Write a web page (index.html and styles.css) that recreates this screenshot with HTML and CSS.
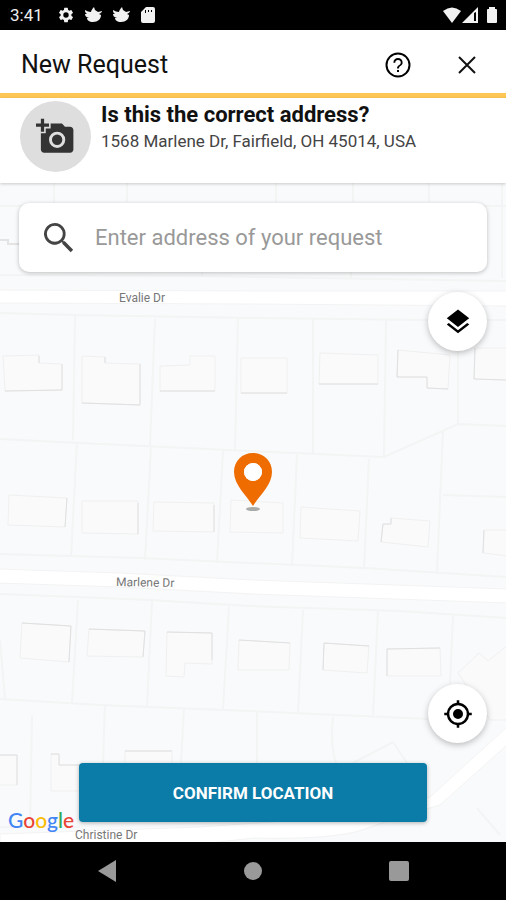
FILE: index.html
```html
<!DOCTYPE html>
<html lang="en">
<head>
  <meta charset="UTF-8">
  <meta name="viewport" content="width=device-width, initial-scale=1.0">
  <title>New Request</title>
  <link rel="stylesheet" href="styles.css">
</head>
<body>
  <div class="status-bar">
    <span class="clock">3:41</span>
    <div class="status-icons">
      <svg width="18" height="18" viewBox="0 0 24 24"><path d="M19.14 12.94c.04-.3.06-.61.06-.94s-.02-.64-.07-.94l2.03-1.58a.49.49 0 0 0 .12-.61l-1.92-3.32a.49.49 0 0 0-.59-.22l-2.39.96a7 7 0 0 0-1.62-.94l-.36-2.54a.48.48 0 0 0-.48-.41h-3.84a.48.48 0 0 0-.47.41l-.36 2.54a7 7 0 0 0-1.62.94l-2.39-.96a.48.48 0 0 0-.59.22L2.74 8.87a.48.48 0 0 0 .12.61l2.03 1.58a7 7 0 0 0 0 1.88l-2.03 1.58a.49.49 0 0 0-.12.61l1.92 3.32c.12.22.37.29.59.22l2.39-.96c.5.38 1.03.7 1.62.94l.36 2.54c.05.24.24.41.48.41h3.84c.24 0 .44-.17.47-.41l.36-2.54a7 7 0 0 0 1.62-.94l2.39.96c.22.08.47 0 .59-.22l1.92-3.32a.48.48 0 0 0-.12-.61zM12 15.6a3.6 3.6 0 1 1 0-7.2 3.6 3.6 0 0 1 0 7.2z"/></svg>
      <svg width="19" height="18" viewBox="0 0 19 18"><path d="M1 4c2 1 4 2 6 2 0-1 1-3 3-5l1 3 3 2 4-1c0 1-1 2-3 3l2 1c0 4-3 7-8 7-4 0-6-2-6-4h2C2 11 1 10 1 8h2C1 7 1 5 1 4z"/></svg>
      <svg width="19" height="18" viewBox="0 0 19 18"><path d="M1 4c2 1 4 2 6 2 0-1 1-3 3-5l1 3 3 2 4-1c0 1-1 2-3 3l2 1c0 4-3 7-8 7-4 0-6-2-6-4h2C2 11 1 10 1 8h2C1 7 1 5 1 4z"/></svg>
      <svg width="16" height="18" viewBox="0 0 16 18"><path d="M6 1h7q2 0 2 2v12q0 2-2 2H3q-2 0-2-2V6zM5 4v3h1V4zm3 0v2h1V4zm3 0v2h1V4z" fill-rule="evenodd"/></svg>
    </div>
    <div class="signal-icons">
      <svg width="20" height="18" viewBox="0 0 20 18"><path d="M1 5Q10-2 19 5L10 17z"/></svg>
      <svg width="17" height="18" viewBox="0 0 17 18"><path d="M16 1v16H0zm-4 6v8h2V6z" fill-rule="evenodd"/></svg>
      <svg class="battery" width="12" height="18" viewBox="0 0 12 18"><path d="M3 1h6v2h1q1 0 1 1v12q0 1-1 1H2q-1 0-1-1V4q0-1 1-1h1z"/></svg>
    </div>
  </div>

  <header class="app-bar">
    <h1>New Request</h1>
    <button class="icon-button" aria-label="Help">
      <svg width="30" height="30" viewBox="0 0 24 24"><path d="M11.200 17.600h1.600v-1.600h-1.600zM12 2a10 10 0 1 0 0 20 10 10 0 0 0 0-20zm0 18.400a8.400 8.400 0 1 1 0-16.800 8.400 8.400 0 0 1 0 16.800zM12 6.400a3.700 3.700 0 0 0-3.700 3.700h1.500a2.200 2.200 0 1 1 4.400 0c0 2-3 1.800-3 4.700h1.500c0-2.200 3-2.400 3-4.700A3.700 3.700 0 0 0 12 6.400z"/></svg>
    </button>
    <button class="icon-button" aria-label="Close">
      <svg width="30" height="30" viewBox="0 0 30 30"><path d="M7 7l16 16M23 7L7 23" fill="none" stroke="#111" stroke-width="2"/></svg>
    </button>
  </header>

  <section class="address-panel">
    <button class="photo-button" aria-label="Add photo">
      <svg width="39" height="39" viewBox="0 0 24 24"><path d="M3 4V1h2v3h3v2H5v3H3V6H0V4h3zm3 6V7h3V4h7l1.830 2H21c1.100 0 2 .9 2 2v12c0 1.100-.9 2-2 2H5c-1.100 0-2-.9-2-2V10h3zm7 9a5 5 0 1 0 0-10 5 5 0 0 0 0 10zm-3.200-5a3.200 3.200 0 1 0 6.400 0 3.200 3.200 0 0 0-6.400 0z"/></svg>
    </button>
    <div class="address-text">
      <h2>Is this the correct address?</h2>
      <p>1568 Marlene Dr, Fairfield, OH 45014, USA</p>
    </div>
  </section>

  <main class="map">
    <svg class="map-canvas" viewBox="0 183 506 659" preserveAspectRatio="xMidYMid slice">
      <!-- lot lines -->
      <g class="lots">
        <path d="M0 206H506M54 183v23M127 183v19M276 183v19M353 183v19M429 183v19M502 183V278M0 275L200 276 506 281M202 270v6M351 270v8"/>
        <path d="M0 313L75 315 250 318 428 320H506M75 316L73 440M155 319L150 446M238 319L235 449M313 319V453M386 319L384 457M458 348V424"/>
        <path d="M0 439L80 443 250 451 384 457 458 424 506 426M77 442L71 557M151 446L145 560M223 451L217 563M297 455L292 566M369 459L364 569M443 430L437 573M443 495L506 497"/>
        <path d="M0 554L140 558 365 568 506 577M0 594L150 600 250 606 400 611 506 618"/>
        <path d="M78 600L72 703M152 601L147 706M229 607L223 709M303 610L298 713M378 611L373 716M453 616L450 684M0 640L5 699M0 699L100 705 250 711 430 719M32 715L30 828M105 705L103 763M184 708L181 763M257 711V763M333 717Q330 745 336 763"/>
        <path d="M0 827H80M353 763L393 742 407 763M477 808L500 835"/>
        <path class="driveway" d="M0 240H8V244H20"/>
      </g>

      <!-- roads -->
      <g class="roads">
        <path d="M-2 290L250 291 508 291V306L250 304-2 303z"/>
        <path d="M-2 569L120 573 253 580 508 589V603L253 594 120 587-2 583z"/>
        <path d="M0 834L200 827 300 820Q390 812 430 797L495 738 508 726V744L440 805Q395 818 365 829T253 838L150 850H0z"/>
      </g>

      <!-- buildings -->
      <g class="houses">
        <path d="M3 356L39 355V363L62 364V390L5 391zM82 356L105 357V363L140 364V405L82 403zM160 366L190 365V356H215V391H160zM241 358H287V393H241zM320 353L378 355V384H319zM398 350L450 355 448 389 427 388V377H397zM475 348H508V380L474 379z"/>
        <path d="M9 495L67 498 65 527 8 525zM82 501H138V534L82 533zM154 502L214 503V532L153 531zM231 500L283 503V533L230 532zM301 507L360 511 358 541 300 538zM391 518L430 521 428 547 381 542 383 524H391zM484 530H508V556L483 553z"/>
        <path d="M22 623L71 626 69 662 20 658zM89 629L145 631 143 657 87 656zM167 632L212 633V664L185 663 184 677 166 676zM239 640L290 643 289 670 238 670zM324 643L369 646 367 673 323 670zM387 649L440 648 441 676H387zM458 673L479 653 488 661 508 645V720H490z"/>
        <path d="M-2 755H17V785H-2zM51 754H59V765H130V791H51zM125 751H172V770H125z"/>
      </g>
      <g class="shade">
        <path d="M39 356V363M62 364V390L5 391M105 357V363M140 364V405L82 403M215 391H160M287 393H241M319 384H378M398 350L397 377H427V388L448 389M475 348L474 379 506 380"/>
        <path d="M67 498L65 527M138 503V534M214 505V532M391 518V524H383L381 542M484 530L483 553"/>
        <path d="M22 623L71 626 69 662M89 629L145 631 143 657M167 632L212 633V660M239 640L290 643M324 643L369 646M323 670L324 643M387 676V649L440 648M0 755H17V785M51 754H59V765H80M125 751H172"/>
      </g>

      <g class="street-names">
        <text x="119" y="302">Evalie Dr</text>
        <text x="116" y="586" transform="rotate(1 116 586)">Marlene Dr</text>
        <text x="75" y="839">Christine Dr</text>
      </g>
    </svg>

    <svg class="pin" width="40" height="60" viewBox="0 0 40 60">
      <ellipse cx="20" cy="56" rx="7" ry="2" fill="#a9aba8"/>
      <path d="M20 0C9 0 1 8 1 19c0 13 13 24 19 34 6-10 19-21 19-34C39 8 31 0 20 0zm0 10a9 9 0 1 1 0 18 9 9 0 0 1 0-18z" fill="#ef6c00"/>
      <circle cx="20" cy="19" r="9" fill="#fff"/>
    </svg>

    <div class="map-controls">
      <label class="search-box">
        <svg width="40" height="40" viewBox="0 0 24 24"><path d="M15.500 14h-.79l-.28-.27A6.500 6.500 0 1 0 13.730 14.430l.27.28v.79l5 4.990L20.490 19l-4.990-5zm-6 .3a4.800 4.800 0 1 1 0-9.600 4.800 4.800 0 0 1 0 9.600z" fill="#444"/></svg>
        <input type="text" placeholder="Enter address of your request" aria-label="Address of your request">
      </label>
      <button class="round-button" aria-label="Map layers">
        <svg width="30" height="30" viewBox="0 0 24 24"><path d="M11.990 18.540l-7.370-5.730L3 14.070l9 7 9-7-1.630-1.270zM12 16l7.360-5.730L21 9l-9-7-9 7 1.630 1.270z"/></svg>
      </button>
      <button class="round-button locate" aria-label="My location">
        <svg width="30" height="30" viewBox="0 0 24 24"><path d="M12 8a4 4 0 1 0 0 8 4 4 0 0 0 0-8zm8.940 3A9 9 0 0 0 13 3.060V1h-2v2.060A9 9 0 0 0 3.060 11H1v2h2.060A9 9 0 0 0 11 20.940V23h2v-2.060A9 9 0 0 0 20.940 13H23v-2zM12 19a7 7 0 1 1 0-14 7 7 0 0 1 0 14z"/></svg>
      </button>
      <button class="confirm">CONFIRM LOCATION</button>
    </div>

    <div class="google"><span class="blue">G</span><span class="red">o</span><span class="yellow">o</span><span class="blue">g</span><span class="green">l</span><span class="red">e</span></div>
  </main>

  <nav class="nav-bar">
    <button aria-label="Back"><svg width="20" height="22" viewBox="0 0 20 22"><path d="M19 0v22L1 11z"/></svg></button>
    <button aria-label="Home"><svg width="20" height="20" viewBox="0 0 20 20"><circle cx="10" cy="10" r="9"/></svg></button>
    <button aria-label="Recent apps"><svg width="20" height="20" viewBox="0 0 20 20"><rect width="20" height="20" rx="2"/></svg></button>
  </nav>
</body>
</html>
```
FILE: styles.css
```css
* {
  box-sizing: border-box;
}

body {
  margin: 0;
  min-height: 100vh;
  display: flex;
  flex-direction: column;
  font-family: Roboto, 'Liberation Sans', sans-serif;
  color: #111;
  background-color: #fff;
}

h1, h2, p {
  margin: 0;
}

button {
  font-family: inherit;
  border: none;
  padding: 0;
  background: none;
  cursor: pointer;
}

svg {
  display: block;
}

/* Status bar */
.status-bar {
  display: flex;
  align-items: center;
  height: 30px;
  padding: 0 8px 0 10px;
  background-color: #000;
  color: #eee;
  fill: #f2f2f2;
}

.clock {
  width: 47px;
  font-size: 17px;
}

.status-icons {
  display: flex;
  gap: 9px;
}

.signal-icons {
  display: flex;
  margin-left: auto;
}

.battery {
  margin-left: 7px;
}

/* App bar */
.app-bar {
  display: flex;
  align-items: center;
  gap: 39px;
  height: 68px;
  padding: 6px 24px 0 21px;
  border-bottom: 5px solid #fec654;
}

.app-bar h1 {
  flex: 1;
  font-size: 25px;
  font-weight: 400;
}

.icon-button {
  width: 30px;
  height: 30px;
}

/* Address panel */
.address-panel {
  display: flex;
  gap: 10px;
  padding: 3px 20px 11px;
  position: relative;
  z-index: 1;
  background-color: #fff;
  box-shadow: 0 1px 3px rgba(0, 0, 0, 0.2);
}

.photo-button {
  flex: none;
  display: flex;
  align-items: center;
  justify-content: center;
  width: 71px;
  height: 71px;
  border-radius: 50%;
  background-color: #dedede;
  fill: #333;
}

.address-text h2 {
  font-size: 22px;
  font-weight: 700;
  line-height: 28px;
}

.address-text p {
  font-size: 17px;
  line-height: 24px;
  color: #444;
}

/* Map */
.map {
  flex: 1;
  display: flex;
  position: relative;
  overflow: hidden;
  background-color: #f9fafb;
}

.map-canvas {
  position: absolute;
  width: 100%;
  height: 100%;
}

.lots {
  fill: none;
  stroke: #f3f4f4;
  stroke-width: 2;
}

.driveway {
  stroke: #e4e4e4;
}

.roads {
  fill: #fff;
  stroke: #f3f3f3;
}

.houses {
  fill: #fafafa;
  stroke: #f0f0f0;
}

.shade {
  fill: none;
  stroke: #e0e0e0;
}

.street-names {
  font-size: 12px;
  fill: #777;
}

.pin {
  position: absolute;
  left: 50%;
  top: 50%;
  transform: translate(-50%, -100%);
}

.map-controls {
  flex: 1;
  display: flex;
  flex-direction: column;
  align-items: flex-end;
  gap: 20px;
  position: relative;
  padding: 20px 19px;
}

.search-box {
  align-self: stretch;
  display: flex;
  align-items: center;
  gap: 16px;
  height: 69px;
  padding: 0 20px;
  border-radius: 10px;
  background-color: #fff;
  box-shadow: 0 1px 4px rgba(0, 0, 0, 0.25);
}

.search-box input {
  flex: 1;
  min-width: 0;
  padding: 0;
  border: none;
  outline: none;
  font-family: inherit;
  font-size: 22px;
  font-weight: 400;
  background: none;
}

.search-box input::placeholder {
  color: #999;
}

.round-button {
  display: flex;
  align-items: center;
  justify-content: center;
  width: 59px;
  height: 59px;
  border-radius: 50%;
  background-color: #fff;
  box-shadow: 0 2px 6px rgba(0, 0, 0, 0.25);
}

.locate {
  margin-top: auto;
}

.confirm {
  align-self: stretch;
  height: 59px;
  margin: 0 60px;
  border-radius: 4px;
  background-color: #0b7ba8;
  color: #fff;
  font-size: 17px;
  font-weight: 700;
  box-shadow: 0 1px 4px rgba(0, 0, 0, 0.3);
}

.google {
  position: absolute;
  left: 8px;
  bottom: 8px;
  font-family: Lato, sans-serif;
  font-size: 21px;
  font-weight: 500;
  line-height: 28px;
}

.blue {
  color: #4285f4;
}

.red {
  color: #ea4335;
}

.yellow {
  color: #fbbc05;
}

.green {
  color: #34a853;
}

/* Navigation bar */
.nav-bar {
  display: flex;
  align-items: center;
  justify-content: center;
  gap: 126px;
  height: 58px;
  background-color: #000;
  fill: #999;
}
```
